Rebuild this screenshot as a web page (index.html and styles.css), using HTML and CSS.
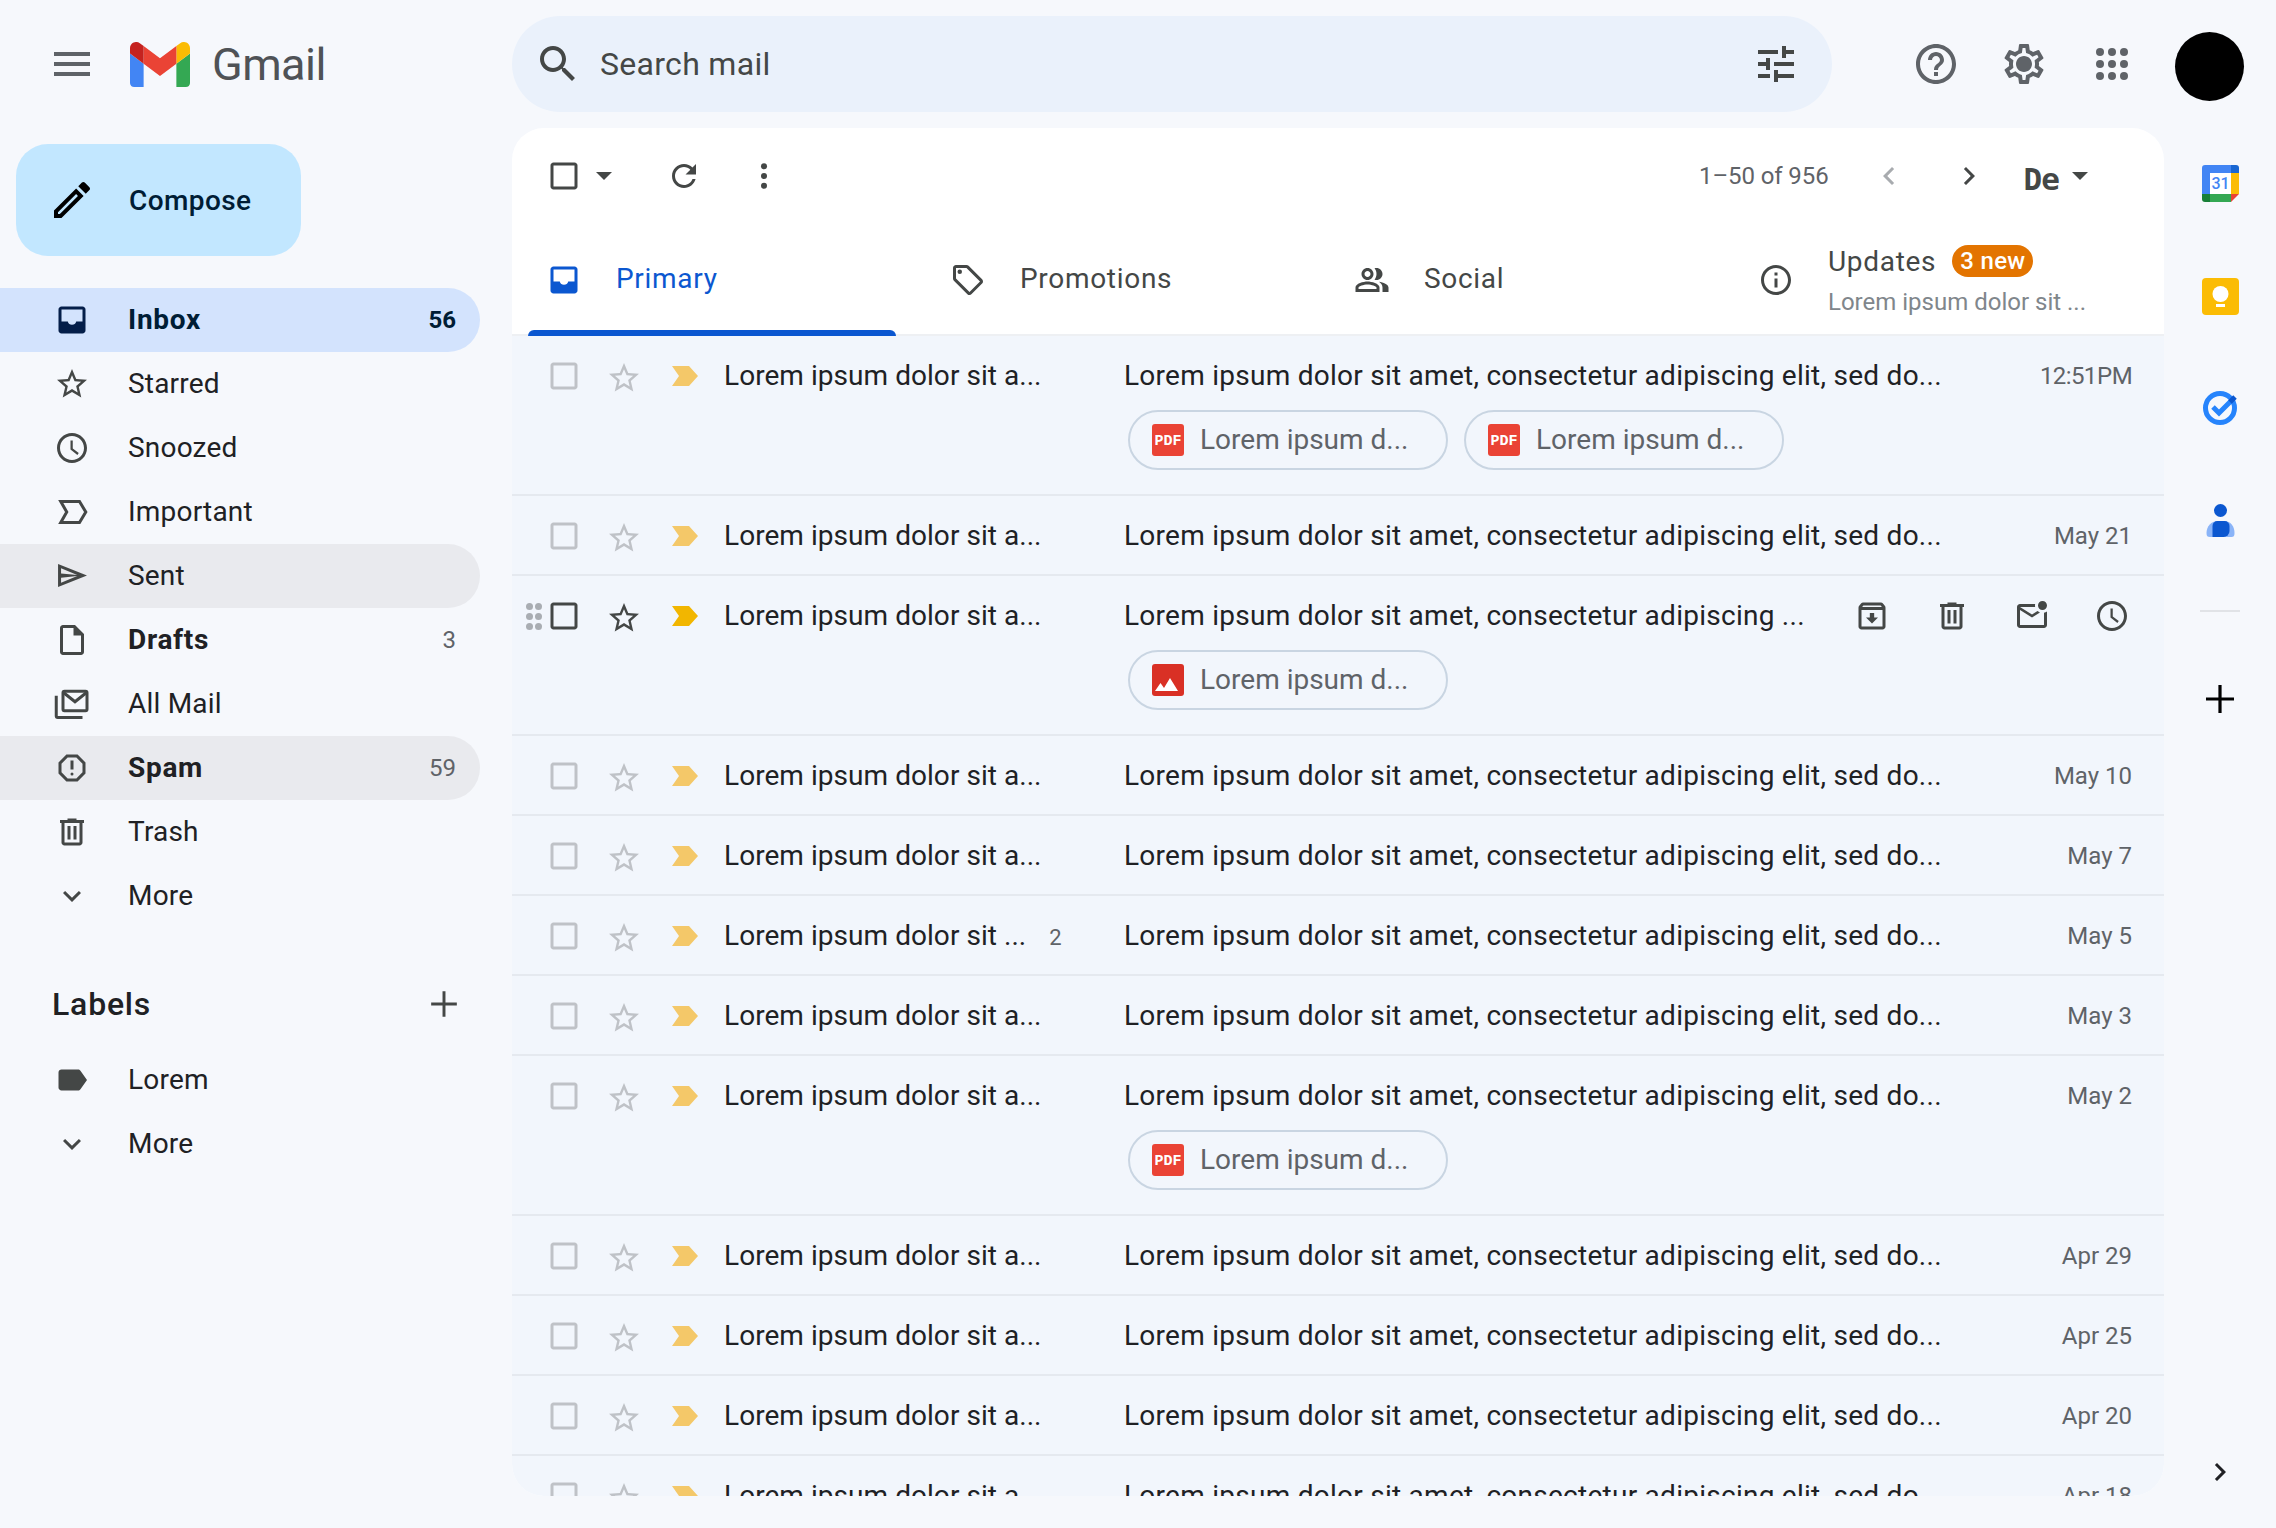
FILE: index.html
```html
<!DOCTYPE html>
<html lang="en">
<head>
    <meta charset="UTF-8">
    <title>Gmail</title>
    <link rel="stylesheet" href="styles.css">
</head>
<body>
    <!-- icon sprite -->
    <svg class="sprite" xmlns="http://www.w3.org/2000/svg">
        <symbol id="i-menu" viewBox="0 0 24 24"><path d="M3 18h18v-2H3v2zm0-5h18v-2H3v2zm0-7v2h18V6H3z"/></symbol>
        <symbol id="i-search" viewBox="0 0 24 24"><path d="M15.5 14h-.79l-.28-.27C15.41 12.59 16 11.11 16 9.5 16 5.91 13.09 3 9.5 3S3 5.91 3 9.5 5.91 16 9.5 16c1.61 0 3.09-.59 4.23-1.57l.27.28v.79l5 4.99L20.49 19l-4.99-5zm-6 0C7.01 14 5 11.99 5 9.5S7.01 5 9.5 5 14 7.01 14 9.5 11.99 14 9.5 14z"/></symbol>
        <symbol id="i-tune" viewBox="0 0 24 24"><path d="M3 17v2h6v-2H3zM3 5v2h10V5H3zm10 16v-2h8v-2h-8v-2h-2v6h2zM7 9v2H3v2h4v2h2V9H7zm14 4v-2H11v2h10zm-6-4h2V7h4V5h-4V3h-2v6z"/></symbol>
        <symbol id="i-help" viewBox="0 0 24 24"><path d="M11 18h2v-2h-2v2zm1-16C6.48 2 2 6.48 2 12s4.48 10 10 10 10-4.48 10-10S17.52 2 12 2zm0 18c-4.41 0-8-3.59-8-8s3.59-8 8-8 8 3.59 8 8-3.59 8-8 8zm0-14c-2.21 0-4 1.79-4 4h2c0-1.1.9-2 2-2s2 .9 2 2c0 2-3 1.75-3 5h2c0-2.25 3-2.5 3-5 0-2.21-1.79-4-4-4z"/></symbol>
        <symbol id="i-gear" viewBox="0 0 24 24"><path d="M19.43 12.98c.04-.32.07-.64.07-.98 0-.34-.03-.66-.07-.98l2.11-1.65c.19-.15.24-.42.12-.64l-2-3.46c-.09-.16-.26-.25-.44-.25-.06 0-.12.01-.17.03l-2.49 1c-.52-.4-1.08-.73-1.69-.98l-.38-2.65C14.46 2.18 14.25 2 14 2h-4c-.25 0-.46.18-.49.42l-.38 2.65c-.61.25-1.17.59-1.69.98l-2.49-1c-.06-.02-.12-.03-.18-.03-.17 0-.34.09-.43.25l-2 3.46c-.13.22-.07.49.12.64l2.11 1.65c-.04.32-.07.65-.07.98 0 .33.03.66.07.98l-2.11 1.65c-.19.15-.24.42-.12.64l2 3.46c.09.16.26.25.44.25.06 0 .12-.01.17-.03l2.49-1c.52.4 1.08.73 1.69.98l.38 2.65c.03.24.24.42.49.42h4c.25 0 .46-.18.49-.42l.38-2.65c.61-.25 1.17-.59 1.69-.98l2.49 1c.06.02.12.03.18.03.17 0 .34-.09.43-.25l2-3.46c.12-.22.07-.49-.12-.64l-2.11-1.65zm-1.98-1.71c.04.31.05.52.05.73 0 .21-.02.43-.05.73l-.14 1.13.89.7 1.08.84-.7 1.21-1.27-.51-1.04-.42-.9.68c-.43.32-.84.56-1.25.73l-1.06.43-.16 1.13-.2 1.35h-1.4l-.19-1.35-.16-1.13-1.06-.43c-.43-.18-.83-.41-1.23-.71l-.91-.7-1.06.43-1.27.51-.7-1.21 1.08-.84.89-.7-.14-1.13c-.03-.31-.05-.54-.05-.74s.02-.43.05-.73l.14-1.13-.89-.7-1.08-.84.7-1.21 1.27.51 1.04.42.9-.68c.43-.32.84-.56 1.25-.73l1.06-.43.16-1.13.2-1.35h1.39l.19 1.35.16 1.13 1.06.43c.43.18.83.41 1.23.71l.91.7 1.06-.43 1.27-.51.7 1.21-1.07.85-.89.7.14 1.13zM12 8c-2.21 0-4 1.79-4 4s1.79 4 4 4 4-1.79 4-4-1.79-4-4-4z"/></symbol>
        <symbol id="i-apps" viewBox="0 0 24 24"><circle cx="6" cy="6" r="2"/><circle cx="12" cy="6" r="2"/><circle cx="18" cy="6" r="2"/><circle cx="6" cy="12" r="2"/><circle cx="12" cy="12" r="2"/><circle cx="18" cy="12" r="2"/><circle cx="6" cy="18" r="2"/><circle cx="12" cy="18" r="2"/><circle cx="18" cy="18" r="2"/></symbol>
        <symbol id="i-pencil" viewBox="0 0 24 24"><path d="M14.06 9.02l.92.92L5.92 19H5v-.92l9.06-9.06M17.66 3c-.25 0-.51.1-.7.29l-1.83 1.83 3.75 3.75 1.83-1.83c.39-.39.39-1.02 0-1.41l-2.34-2.34c-.2-.2-.45-.29-.71-.29zm-3.6 3.19L3 17.25V21h3.75L17.81 9.94l-3.75-3.75z"/></symbol>
        <symbol id="i-inbox" viewBox="0 0 24 24"><path fill-rule="evenodd" d="M5 3h14c1.1 0 2 .9 2 2v14c0 1.1-.9 2-2 2H5c-1.1 0-2-.9-2-2V5c0-1.1.9-2 2-2zm0 2v8h4.2a2.9 2.9 0 0 0 5.6 0H19V5z"/></symbol>
        <symbol id="i-star" viewBox="0 0 24 24"><path d="M22 9.24l-7.19-.62L12 2 9.19 8.63 2 9.24l5.46 4.73L5.82 21 12 17.27 18.18 21l-1.63-7.03L22 9.24zM12 15.4l-3.76 2.27 1-4.28-3.32-2.88 4.38-.38L12 6.1l1.71 4.04 4.38.38-3.32 2.88 1 4.28L12 15.4z"/></symbol>
        <symbol id="i-clock" viewBox="0 0 24 24"><path d="M11.99 2C6.47 2 2 6.48 2 12s4.47 10 9.99 10C17.52 22 22 17.52 22 12S17.52 2 11.99 2zM12 20c-4.42 0-8-3.58-8-8s3.58-8 8-8 8 3.58 8 8-3.58 8-8 8zm.5-13H11v6l4.6 3.6.9-1.2-4-3z"/></symbol>
        <symbol id="i-important" viewBox="0 0 24 24"><path fill="none" stroke="currentColor" stroke-width="2" d="M4.5 5H17l4.2 7-4.2 7H4.5L8.5 12z"/></symbol>
        <symbol id="i-send" viewBox="0 0 24 24"><path fill-rule="evenodd" d="M2.7 4L22 11.7 2.7 19.4zM4.7 6.9v3.4l10.8 1.1zM4.7 16.5v-3.4l10.8-1.1z"/></symbol>
        <symbol id="i-draft" viewBox="0 0 24 24"><path fill-rule="evenodd" d="M14 2H6c-1.1 0-2 .9-2 2v16c0 1.1.9 2 2 2h12c1.1 0 2-.9 2-2V8zM6 4h7v5h5v11H6z"/></symbol>
        <symbol id="i-allmail" viewBox="0 0 24 24"><g fill="none" stroke="currentColor" stroke-width="2"><rect x="6" y="3.5" width="16" height="13" rx="1"/><path d="M6.5 4.5l7.5 6 7.5-6M1.5 6.5V20a1 1 0 0 0 1 1H19"/></g></symbol>
        <symbol id="i-spam" viewBox="0 0 24 24"><path d="M15.73 3H8.27L3 8.27v7.46L8.27 21h7.46L21 15.73V8.27L15.73 3zM19 14.9L14.9 19H9.1L5 14.9V9.1L9.1 5h5.8L19 9.1v5.8z"/><rect x="11" y="7" width="2" height="6"/><circle cx="12" cy="16" r="1"/></symbol>
        <symbol id="i-trash" viewBox="0 0 24 24"><path d="M15 4V3H9v1H4v2h1v13c0 1.1.9 2 2 2h10c1.1 0 2-.9 2-2V6h1V4h-5zm2 15H7V6h10v13zM9 8h2v9H9zm4 0h2v9h-2z"/></symbol>
        <symbol id="i-expand" viewBox="0 0 24 24"><path d="M16.59 8.59L12 13.17 7.41 8.59 6 10l6 6 6-6z"/></symbol>
        <symbol id="i-label" viewBox="0 0 24 24"><path d="M17.63 5.84C17.27 5.33 16.67 5 16 5L5 5.01C3.9 5.01 3 5.9 3 7v10c0 1.1.9 1.99 2 1.99L16 19c.67 0 1.27-.33 1.63-.84L22 12l-4.37-6.16z"/></symbol>
        <symbol id="i-plus" viewBox="0 0 24 24"><path d="M19 12.8h-6.2V19h-1.6v-6.2H5v-1.6h6.2V5h1.6v6.2H19z"/></symbol>
        <symbol id="i-check" viewBox="0 0 24 24"><path d="M19 5v14H5V5h14m0-2H5c-1.1 0-2 .9-2 2v14c0 1.1.9 2 2 2h14c1.1 0 2-.9 2-2V5c0-1.1-.9-2-2-2z"/></symbol>
        <symbol id="i-refresh" viewBox="0 0 24 24"><path d="M17.65 6.35C16.2 4.9 14.21 4 12 4c-4.42 0-7.99 3.58-7.99 8s3.57 8 7.99 8c3.73 0 6.84-2.55 7.73-6h-2.08c-.82 2.33-3.04 4-5.65 4-3.31 0-6-2.69-6-6s2.69-6 6-6c1.66 0 3.14.69 4.22 1.78L13 11h7V4l-2.35 2.35z"/></symbol>
        <symbol id="i-more" viewBox="0 0 24 24"><circle cx="12" cy="5.5" r="2"/><circle cx="12" cy="12" r="2"/><circle cx="12" cy="18.5" r="2"/></symbol>
        <symbol id="i-prev" viewBox="0 0 24 24"><path d="M15.41 7.41L14 6l-6 6 6 6 1.41-1.41L10.83 12z"/></symbol>
        <symbol id="i-next" viewBox="0 0 24 24"><path d="M10 6L8.59 7.41 13.17 12l-4.58 4.59L10 18l6-6z"/></symbol>
        <symbol id="i-tag" viewBox="0 0 24 24"><path d="M21.41 11.58l-9-9C12.05 2.22 11.55 2 11 2H4c-1.1 0-2 .9-2 2v7c0 .55.22 1.05.59 1.42l9 9c.36.36.86.58 1.41.58s1.05-.22 1.41-.59l7-7c.37-.36.59-.86.59-1.41s-.23-1.06-.59-1.42zM13 20.01L4 11V4h7v-.01l9 9-7 7.02z"/><circle cx="6.5" cy="6.5" r="1.5"/></symbol>
        <symbol id="i-people" viewBox="0 0 24 24"><path d="M16.67 13.13C18.04 14.06 19 15.32 19 17v3h4v-3c0-2.18-3.57-3.47-6.33-3.87z"/><path d="M15 12c2.21 0 4-1.79 4-4s-1.79-4-4-4c-.47 0-.91.1-1.33.24C14.5 5.27 15 6.58 15 8s-.5 2.73-1.33 3.76c.42.14.86.24 1.33.24z"/><path d="M9 12c2.21 0 4-1.79 4-4s-1.79-4-4-4-4 1.79-4 4 1.79 4 4 4zm0-6c1.1 0 2 .9 2 2s-.9 2-2 2-2-.9-2-2 .9-2 2-2z"/><path d="M9 13c-2.67 0-8 1.34-8 4v3h16v-3c0-2.66-5.33-4-8-4zm6 5H3v-.99C3.2 16.29 6.3 15 9 15s5.8 1.29 6 2v1z"/></symbol>
        <symbol id="i-info" viewBox="0 0 24 24"><path d="M11 7h2v2h-2zm0 4h2v6h-2zm1-9C6.48 2 2 6.48 2 12s4.48 10 10 10 10-4.48 10-10S17.52 2 12 2zm0 18c-4.41 0-8-3.59-8-8s3.59-8 8-8 8 3.59 8 8-3.59 8-8 8z"/></symbol>
        <symbol id="i-archive" viewBox="0 0 24 24"><path d="M20.54 5.23l-1.39-1.68C18.88 3.21 18.47 3 18 3H6c-.47 0-.88.21-1.16.55L3.46 5.23C3.17 5.57 3 6.02 3 6.5V19c0 1.1.9 2 2 2h14c1.1 0 2-.9 2-2V6.5c0-.48-.17-.93-.46-1.27zM6.24 5h11.52l.83 1H5.42l.82-1zM5 19V8h14v11H5zm8.45-9h-2.9v3H8l4 4 4-4h-2.55z"/></symbol>
        <symbol id="i-unread" viewBox="0 0 24 24"><path d="M22 8.98V18c0 1.1-.9 2-2 2H4c-1.1 0-2-.9-2-2V6c0-1.1.9-2 2-2h10.1c-.06.32-.1.66-.1 1s.04.68.1 1H4l8 5 3.67-2.29c.47.43 1.02.76 1.63.98L12 13 4 8v10h16V9.9c.74-.15 1.42-.48 2-.92zM16 5c0 1.66 1.34 3 3 3s3-1.34 3-3-1.34-3-3-3-3 1.34-3 3z"/></symbol>
        <symbol id="i-flag" viewBox="0 0 26 20"><path d="M0 0h17l9 10-9 10H0l7-10z"/></symbol>
        <symbol id="i-pdf" viewBox="0 0 32 32"><rect width="32" height="32" rx="3" fill="#ea4335"/><text x="16" y="21" text-anchor="middle" class="pdf-text">PDF</text></symbol>
        <symbol id="i-image" viewBox="0 0 32 32"><rect width="32" height="32" rx="3" fill="#d93025"/><path fill="#fff" d="M3 27l5.5-8 3.5 5 6-10 8 13z"/></symbol>
    </svg>

    <header class="topbar">
        <div class="brand">
            <svg class="ic ic-lg ic-menu"><use href="#i-menu"/></svg>
            <svg class="gmail-m" viewBox="52 42 88 66">
                <path fill="#4285f4" d="M58 108h14V74L52 59v43c0 3.32 2.69 6 6 6"/>
                <path fill="#34a853" d="M120 108h14c3.32 0 6-2.69 6-6V59l-20 15"/>
                <path fill="#fbbc04" d="M120 48v26l20-15v-8c0-7.42-8.47-11.65-14.4-7.2"/>
                <path fill="#ea4335" d="M72 74V48l24 18 24-18v26L96 92"/>
                <path fill="#c5221f" d="M52 51v8l20 15V48l-5.6-4.2c-5.94-4.45-14.4-.22-14.4 7.2"/>
            </svg>
            <span class="gmail-word">Gmail</span>
        </div>
        <div class="search">
            <svg class="ic ic-lg"><use href="#i-search"/></svg>
            <span class="search-text">Search mail</span>
            <svg class="ic ic-lg"><use href="#i-tune"/></svg>
        </div>
        <div class="top-actions">
            <svg class="ic ic-lg"><use href="#i-help"/></svg>
            <svg class="ic ic-lg"><use href="#i-gear"/></svg>
            <svg class="ic ic-lg"><use href="#i-apps"/></svg>
            <div class="avatar"></div>
        </div>
    </header>

    <div class="layout">
        <aside class="sidebar">
            <div class="compose">
                <svg class="ic ic-lg"><use href="#i-pencil"/></svg>
                <span>Compose</span>
            </div>
            <nav class="nav">
                <div class="nav-row active"><svg class="ic"><use href="#i-inbox"/></svg><span class="nav-name">Inbox</span><span class="nav-count">56</span></div>
                <div class="nav-row"><svg class="ic"><use href="#i-star"/></svg><span class="nav-name">Starred</span></div>
                <div class="nav-row"><svg class="ic"><use href="#i-clock"/></svg><span class="nav-name">Snoozed</span></div>
                <div class="nav-row"><svg class="ic"><use href="#i-important"/></svg><span class="nav-name">Important</span></div>
                <div class="nav-row hover"><svg class="ic"><use href="#i-send"/></svg><span class="nav-name">Sent</span></div>
                <div class="nav-row strong"><svg class="ic"><use href="#i-draft"/></svg><span class="nav-name">Drafts</span><span class="nav-count">3</span></div>
                <div class="nav-row"><svg class="ic"><use href="#i-allmail"/></svg><span class="nav-name">All Mail</span></div>
                <div class="nav-row hover strong"><svg class="ic"><use href="#i-spam"/></svg><span class="nav-name">Spam</span><span class="nav-count">59</span></div>
                <div class="nav-row"><svg class="ic"><use href="#i-trash"/></svg><span class="nav-name">Trash</span></div>
                <div class="nav-row"><svg class="ic"><use href="#i-expand"/></svg><span class="nav-name">More</span></div>
            </nav>
            <div class="labels-head">
                <span>Labels</span>
                <svg class="ic ic-add"><use href="#i-plus"/></svg>
            </div>
            <nav class="nav">
                <div class="nav-row"><svg class="ic"><use href="#i-label"/></svg><span class="nav-name">Lorem</span></div>
                <div class="nav-row"><svg class="ic"><use href="#i-expand"/></svg><span class="nav-name">More</span></div>
            </nav>
        </aside>

        <main class="panel">
            <div class="toolbar">
                <svg class="ic"><use href="#i-check"/></svg>
                <span class="caret caret-select"></span>
                <svg class="ic ic-refresh"><use href="#i-refresh"/></svg>
                <svg class="ic ic-dots"><use href="#i-more"/></svg>
                <span class="page-count">1–50 of 956</span>
                <svg class="ic ic-prev"><use href="#i-prev"/></svg>
                <svg class="ic ic-next"><use href="#i-next"/></svg>
                <span class="lang">De</span>
                <span class="caret"></span>
            </div>

            <div class="tabs">
                <div class="tab selected"><svg class="ic"><use href="#i-inbox"/></svg><span class="tab-name">Primary</span></div>
                <div class="tab"><svg class="ic"><use href="#i-tag"/></svg><span class="tab-name">Promotions</span></div>
                <div class="tab"><svg class="ic"><use href="#i-people"/></svg><span class="tab-name">Social</span></div>
                <div class="tab">
                    <svg class="ic"><use href="#i-info"/></svg>
                    <div class="tab-stack">
                        <div class="tab-title"><span class="tab-name">Updates</span><span class="badge">3 new</span></div>
                        <div class="tab-sub">Lorem ipsum dolor sit ...</div>
                    </div>
                </div>
            </div>

            <div class="rows">
                <div class="row tall">
                    <div class="row-line">
                        <svg class="ic box"><use href="#i-check"/></svg>
                        <svg class="ic star"><use href="#i-star"/></svg>
                        <svg class="flag"><use href="#i-flag"/></svg>
                        <span class="sender">Lorem ipsum dolor sit a...</span>
                        <span class="subject">Lorem ipsum dolor sit amet, consectetur adipiscing elit, sed do...</span>
                        <span class="date date-time">12:51 PM</span>
                    </div>
                    <div class="chips">
                        <div class="chip"><svg class="file"><use href="#i-pdf"/></svg><span>Lorem ipsum d...</span></div>
                        <div class="chip"><svg class="file"><use href="#i-pdf"/></svg><span>Lorem ipsum d...</span></div>
                    </div>
                </div>
                <div class="row">
                    <div class="row-line">
                        <svg class="ic box"><use href="#i-check"/></svg>
                        <svg class="ic star"><use href="#i-star"/></svg>
                        <svg class="flag"><use href="#i-flag"/></svg>
                        <span class="sender">Lorem ipsum dolor sit a...</span>
                        <span class="subject">Lorem ipsum dolor sit amet, consectetur adipiscing elit, sed do...</span>
                        <span class="date">May 21</span>
                    </div>
                </div>
                <div class="row tall hovered">
                    <div class="row-line">
                        <span class="drag"><i></i><i></i><i></i><i></i><i></i><i></i></span>
                        <svg class="ic box"><use href="#i-check"/></svg>
                        <svg class="ic star"><use href="#i-star"/></svg>
                        <svg class="flag"><use href="#i-flag"/></svg>
                        <span class="sender">Lorem ipsum dolor sit a...</span>
                        <span class="subject">Lorem ipsum dolor sit amet, consectetur adipiscing ...</span>
                        <span class="row-actions">
                            <svg class="ic"><use href="#i-archive"/></svg>
                            <svg class="ic"><use href="#i-trash"/></svg>
                            <svg class="ic"><use href="#i-unread"/></svg>
                            <svg class="ic"><use href="#i-clock"/></svg>
                        </span>
                    </div>
                    <div class="chips">
                        <div class="chip"><svg class="file"><use href="#i-image"/></svg><span>Lorem ipsum d...</span></div>
                    </div>
                </div>
                <div class="row">
                    <div class="row-line">
                        <svg class="ic box"><use href="#i-check"/></svg>
                        <svg class="ic star"><use href="#i-star"/></svg>
                        <svg class="flag"><use href="#i-flag"/></svg>
                        <span class="sender">Lorem ipsum dolor sit a...</span>
                        <span class="subject">Lorem ipsum dolor sit amet, consectetur adipiscing elit, sed do...</span>
                        <span class="date">May 10</span>
                    </div>
                </div>
                <div class="row">
                    <div class="row-line">
                        <svg class="ic box"><use href="#i-check"/></svg>
                        <svg class="ic star"><use href="#i-star"/></svg>
                        <svg class="flag"><use href="#i-flag"/></svg>
                        <span class="sender">Lorem ipsum dolor sit a...</span>
                        <span class="subject">Lorem ipsum dolor sit amet, consectetur adipiscing elit, sed do...</span>
                        <span class="date">May 7</span>
                    </div>
                </div>
                <div class="row">
                    <div class="row-line">
                        <svg class="ic box"><use href="#i-check"/></svg>
                        <svg class="ic star"><use href="#i-star"/></svg>
                        <svg class="flag"><use href="#i-flag"/></svg>
                        <span class="sender">Lorem ipsum dolor sit ... <em class="thread">2</em></span>
                        <span class="subject">Lorem ipsum dolor sit amet, consectetur adipiscing elit, sed do...</span>
                        <span class="date">May 5</span>
                    </div>
                </div>
                <div class="row">
                    <div class="row-line">
                        <svg class="ic box"><use href="#i-check"/></svg>
                        <svg class="ic star"><use href="#i-star"/></svg>
                        <svg class="flag"><use href="#i-flag"/></svg>
                        <span class="sender">Lorem ipsum dolor sit a...</span>
                        <span class="subject">Lorem ipsum dolor sit amet, consectetur adipiscing elit, sed do...</span>
                        <span class="date">May 3</span>
                    </div>
                </div>
                <div class="row tall">
                    <div class="row-line">
                        <svg class="ic box"><use href="#i-check"/></svg>
                        <svg class="ic star"><use href="#i-star"/></svg>
                        <svg class="flag"><use href="#i-flag"/></svg>
                        <span class="sender">Lorem ipsum dolor sit a...</span>
                        <span class="subject">Lorem ipsum dolor sit amet, consectetur adipiscing elit, sed do...</span>
                        <span class="date">May 2</span>
                    </div>
                    <div class="chips">
                        <div class="chip"><svg class="file"><use href="#i-pdf"/></svg><span>Lorem ipsum d...</span></div>
                    </div>
                </div>
                <div class="row">
                    <div class="row-line">
                        <svg class="ic box"><use href="#i-check"/></svg>
                        <svg class="ic star"><use href="#i-star"/></svg>
                        <svg class="flag"><use href="#i-flag"/></svg>
                        <span class="sender">Lorem ipsum dolor sit a...</span>
                        <span class="subject">Lorem ipsum dolor sit amet, consectetur adipiscing elit, sed do...</span>
                        <span class="date">Apr 29</span>
                    </div>
                </div>
                <div class="row">
                    <div class="row-line">
                        <svg class="ic box"><use href="#i-check"/></svg>
                        <svg class="ic star"><use href="#i-star"/></svg>
                        <svg class="flag"><use href="#i-flag"/></svg>
                        <span class="sender">Lorem ipsum dolor sit a...</span>
                        <span class="subject">Lorem ipsum dolor sit amet, consectetur adipiscing elit, sed do...</span>
                        <span class="date">Apr 25</span>
                    </div>
                </div>
                <div class="row">
                    <div class="row-line">
                        <svg class="ic box"><use href="#i-check"/></svg>
                        <svg class="ic star"><use href="#i-star"/></svg>
                        <svg class="flag"><use href="#i-flag"/></svg>
                        <span class="sender">Lorem ipsum dolor sit a...</span>
                        <span class="subject">Lorem ipsum dolor sit amet, consectetur adipiscing elit, sed do...</span>
                        <span class="date">Apr 20</span>
                    </div>
                </div>
                <div class="row">
                    <div class="row-line">
                        <svg class="ic box"><use href="#i-check"/></svg>
                        <svg class="ic star"><use href="#i-star"/></svg>
                        <svg class="flag"><use href="#i-flag"/></svg>
                        <span class="sender">Lorem ipsum dolor sit a...</span>
                        <span class="subject">Lorem ipsum dolor sit amet, consectetur adipiscing elit, sed do...</span>
                        <span class="date">Apr 18</span>
                    </div>
                </div>
            </div>
        </main>

        <aside class="rail">
            <svg class="rail-app" viewBox="0 0 37 37">
                <path fill="#4285f4" d="M3 0h26v8H8v21H0V3a3 3 0 0 1 3-3z"/>
                <path fill="#1967d2" d="M29 0h5a3 3 0 0 1 3 3v5h-8z"/>
                <path fill="#fbbc04" d="M29 8h8v21h-8z"/>
                <path fill="#34a853" d="M8 29h21v8H8z"/>
                <path fill="#188038" d="M0 29h8v8H3a3 3 0 0 1-3-3z"/>
                <path fill="#ea4335" d="M29 29h8l-8 8z"/>
                <path fill="#fff" d="M8 8h21v21H8z"/>
                <text x="18.5" y="24" text-anchor="middle" class="cal-text">31</text>
            </svg>
            <svg class="rail-app" viewBox="0 0 37 37">
                <rect width="37" height="37" rx="4" fill="#fbbc04"/>
                <circle cx="18.5" cy="16" r="8" fill="#fff"/>
                <rect x="14" y="26" width="9" height="3" fill="#fff"/>
            </svg>
            <svg class="rail-app" viewBox="0 0 37 37">
                <circle cx="18" cy="17" r="14.5" fill="none" stroke="#2684fc" stroke-width="5"/>
                <path fill="none" stroke="#2684fc" stroke-width="5" d="M11 16l6 6 14-14"/>
                <path fill="none" stroke="#0b57d0" stroke-width="5" d="M28 11l5-5"/>
            </svg>
            <svg class="rail-app rail-last" viewBox="0 0 37 37">
                <path fill="#8ab4f8" d="M4.5 29c0-7 5-12 11-12h7c6 0 10 5 10 12 0 3-1 4-3 4H8c-2.5 0-3.5-1-3.5-4z"/>
                <circle cx="18.5" cy="6.5" r="6.5" fill="#0b57d0"/>
                <path fill="#0b57d0" d="M10.500 22a5 5 0 0 1 5-5h7a5 5 0 0 1 5 5v5a6 6 0 0 1-6 6h-11z"/>
            </svg>
            <div class="rail-line"></div>
            <svg class="ic ic-lg rail-plus"><use href="#i-plus"/></svg>
            <svg class="ic rail-next"><use href="#i-next"/></svg>
        </aside>
    </div>
</body>
</html>
```

FILE: styles.css
```css
* {
    box-sizing: border-box;
}

html, body {
    margin: 0;
    height: 100%;
}

body {
    width: 2276px;
    height: 1528px;
    overflow: hidden;
    background-color: #f6f8fc;
    font-family: Roboto, 'Noto Sans', sans-serif;
    font-size: 28px;
    color: #202124;
}

.sprite {
    display: none;
}

.ic {
    display: block;
    flex: none;
    width: 36px;
    height: 36px;
    fill: #444746;
    color: #444746;
}

.ic-lg {
    width: 48px;
    height: 48px;
}

/* top bar */
.topbar {
    display: flex;
    align-items: center;
    height: 128px;
}

.brand {
    display: flex;
    align-items: center;
    width: 512px;
    padding-left: 48px;
}

.ic-menu {
    fill: #5f6368;
}

.gmail-m {
    display: block;
    width: 60px;
    height: 45px;
    margin-left: 34px;
}

.gmail-word {
    margin-left: 22px;
    font-size: 45px;
    color: #4f5256;
    letter-spacing: -0.5px;
}

.search {
    display: flex;
    align-items: center;
    width: 1320px;
    height: 96px;
    padding: 0 32px 0 22px;
    background-color: #eaf1fb;
    border-radius: 48px;
}

.search-text {
    flex: 1;
    margin-left: 18px;
    font-size: 32px;
    letter-spacing: 0.3px;
    color: #444746;
}

.top-actions {
    display: flex;
    align-items: center;
    gap: 40px;
    padding-left: 80px;
}

.top-actions .ic {
    fill: #5f6368;
}

.avatar {
    width: 69px;
    height: 69px;
    margin: 5px 0 0 -1px;
    background-color: #000;
    border-radius: 50%;
}

/* columns */
.layout {
    display: flex;
    height: 1368px;
}

.sidebar {
    flex: none;
    width: 512px;
    padding-top: 16px;
}

.compose {
    display: flex;
    align-items: center;
    gap: 33px;
    width: 285px;
    height: 112px;
    margin-left: 16px;
    padding-left: 32px;
    background-color: #c2e7ff;
    border-radius: 32px;
    font-weight: 500;
    letter-spacing: 0.4px;
    color: #001d35;
}

.compose .ic {
    fill: #000;
}

.nav {
    width: 480px;
    margin-top: 32px;
}

.nav-row {
    display: flex;
    align-items: center;
    gap: 38px;
    height: 64px;
    padding: 0 24px 0 54px;
    border-radius: 0 32px 32px 0;
}

.nav-name {
    flex: 1;
    margin-bottom: 2px;
    letter-spacing: 0.2px;
}

.nav-count {
    font-size: 24px;
    color: #5f6368;
}

.nav-row.active {
    background-color: #d3e3fd;
    color: #001d35;
    font-weight: 700;
}

.nav-row.active .ic {
    fill: #041e49;
}

.nav-row.active .nav-count {
    color: #001d35;
}

.nav-row.hover {
    background-color: #e9eaee;
}

.nav-row.strong .nav-name {
    font-weight: 700;
}

.nav-row.strong .nav-name,
.nav-row.active .nav-name {
    letter-spacing: 0.7px;
}

.labels-head {
    display: flex;
    align-items: center;
    justify-content: space-between;
    width: 480px;
    height: 64px;
    margin-top: 44px;
    padding: 0 14px 0 52px;
    font-size: 32px;
    font-weight: 500;
    letter-spacing: 0.8px;
}

.ic-add {
    width: 44px;
    height: 44px;
}

.labels-head + .nav {
    margin-top: 12px;
}

/* mail panel */
.panel {
    flex: none;
    width: 1652px;
    height: 1368px;
    overflow: hidden;
    background-color: #fff;
    border-radius: 32px;
}

.toolbar {
    display: flex;
    align-items: center;
    height: 96px;
    padding-left: 34px;
}

.caret {
    width: 0;
    height: 0;
    border-style: solid;
    border-width: 8px 8px 0;
    border-color: #444746 transparent transparent;
}

.caret-select {
    margin-left: 14px;
}

.ic-refresh {
    margin-left: 54px;
}

.ic-dots {
    margin-left: 44px;
}

.page-count {
    margin-left: 917px;
    font-size: 24px;
    letter-spacing: -0.1px;
    color: #5f6368;
}

.ic-prev {
    margin-left: 42px;
    fill: #a8abaf;
}

.ic-next {
    margin-left: 44px;
}

.lang {
    margin: 6px 0 0 37px;
    font-family: 'DejaVu Sans Mono', monospace;
    font-size: 31px;
    font-weight: 700;
    letter-spacing: -1px;
    color: #444746;
}

.toolbar .lang + .caret {
    margin-left: 13px;
}

.tabs {
    display: grid;
    grid-template-columns: repeat(4, 368px);
    column-gap: 36px;
    height: 112px;
    padding-left: 16px;
    box-shadow: inset 0 -2px #eef0f3;
}

.tab {
    position: relative;
    display: flex;
    align-items: center;
    gap: 34px;
    padding-left: 18px;
    color: #444746;
}

.tab.selected {
    color: #0b57d0;
}

.tab.selected .ic {
    fill: #0b57d0;
}

.tab.selected::after {
    content: "";
    position: absolute;
    left: 0;
    right: 0;
    bottom: 0;
    height: 6px;
    background-color: #0b57d0;
    border-radius: 6px 6px 0 0;
}

.tab-name {
    margin-bottom: 3px;
    letter-spacing: 0.7px;
}

.tab-stack {
    display: flex;
    flex-direction: column;
    gap: 10px;
}

.tab-title {
    display: flex;
    align-items: center;
    gap: 16px;
}

.tab-title .tab-name {
    margin-bottom: 0;
}

.badge {
    height: 32px;
    padding: 0 8px;
    line-height: 32px;
    border-radius: 16px;
    background-color: #e37400;
    color: #fff;
    font-size: 24px;
    font-weight: 500;
    letter-spacing: 0.3px;
}

.tab-sub {
    font-size: 24px;
    color: #80868b;
}

.row {
    height: 80px;
    background-color: #f2f6fc;
    box-shadow: inset 0 -2px #e5e9ef;
}

.row.tall {
    height: 160px;
}

.row-line {
    position: relative;
    display: flex;
    align-items: center;
    height: 80px;
    padding: 0 32px 0 34px;
}

.box {
    fill: #bfc2c7;
}

.star {
    margin: 3px 0 0 24px;
    fill: #bfc2c7;
}

.flag {
    flex: none;
    width: 26px;
    height: 20px;
    margin-left: 30px;
    fill: #f4c869;
}

.sender {
    flex: none;
    width: 400px;
    margin: 0 0 2px 26px;
    letter-spacing: 0.05px;
}

.thread {
    margin-left: 16px;
    font-style: normal;
    font-size: 22px;
    color: #5f6368;
}

.subject {
    flex: 1;
    margin-bottom: 2px;
    letter-spacing: 0.26px;
}

.date {
    font-size: 24px;
    color: #5f6368;
}

.date-time {
    word-spacing: -5px;
    letter-spacing: -0.6px;
}

.hovered .box,
.hovered .star {
    fill: #444746;
}

.hovered .flag {
    fill: #f2b600;
}

.drag {
    position: absolute;
    left: 14px;
    top: 27px;
    display: grid;
    grid-template-columns: 7px 7px;
    gap: 3px 2px;
}

.drag i {
    width: 7px;
    height: 7px;
    border-radius: 50%;
    background-color: #a9adb2;
}

.row-actions {
    display: flex;
    gap: 44px;
    margin-right: 2px;
}

.chips {
    display: flex;
    gap: 16px;
    margin-top: -6px;
    padding-left: 616px;
}

.chip {
    display: flex;
    align-items: center;
    gap: 16px;
    width: 320px;
    height: 60px;
    padding-left: 22px;
    border: 2px solid #c9d5e2;
    border-radius: 30px;
    color: #5f6368;
}

.chip span {
    margin-bottom: 2px;
}

.file {
    display: block;
    flex: none;
    width: 32px;
    height: 32px;
}

.pdf-text {
    font-family: 'Liberation Mono', monospace;
    font-size: 15px;
    font-weight: 700;
    fill: #fff;
}

/* right rail */
.rail {
    flex: none;
    display: flex;
    flex-direction: column;
    align-items: center;
    width: 112px;
    height: 1400px;
    padding: 37px 0 38px;
}

.rail-app {
    display: block;
    flex: none;
    width: 37px;
    height: 37px;
    margin-bottom: 76px;
}

.rail-last {
    margin-bottom: 69px;
}

.cal-text {
    font-family: Roboto, sans-serif;
    font-size: 16px;
    font-weight: 500;
    fill: #4285f4;
}

.rail-line {
    width: 40px;
    height: 2px;
    background-color: #e1e3e7;
}

.rail-plus {
    margin-top: 63px;
    fill: #000;
}

.rail-next {
    margin-top: auto;
    fill: #202124;
}
```
